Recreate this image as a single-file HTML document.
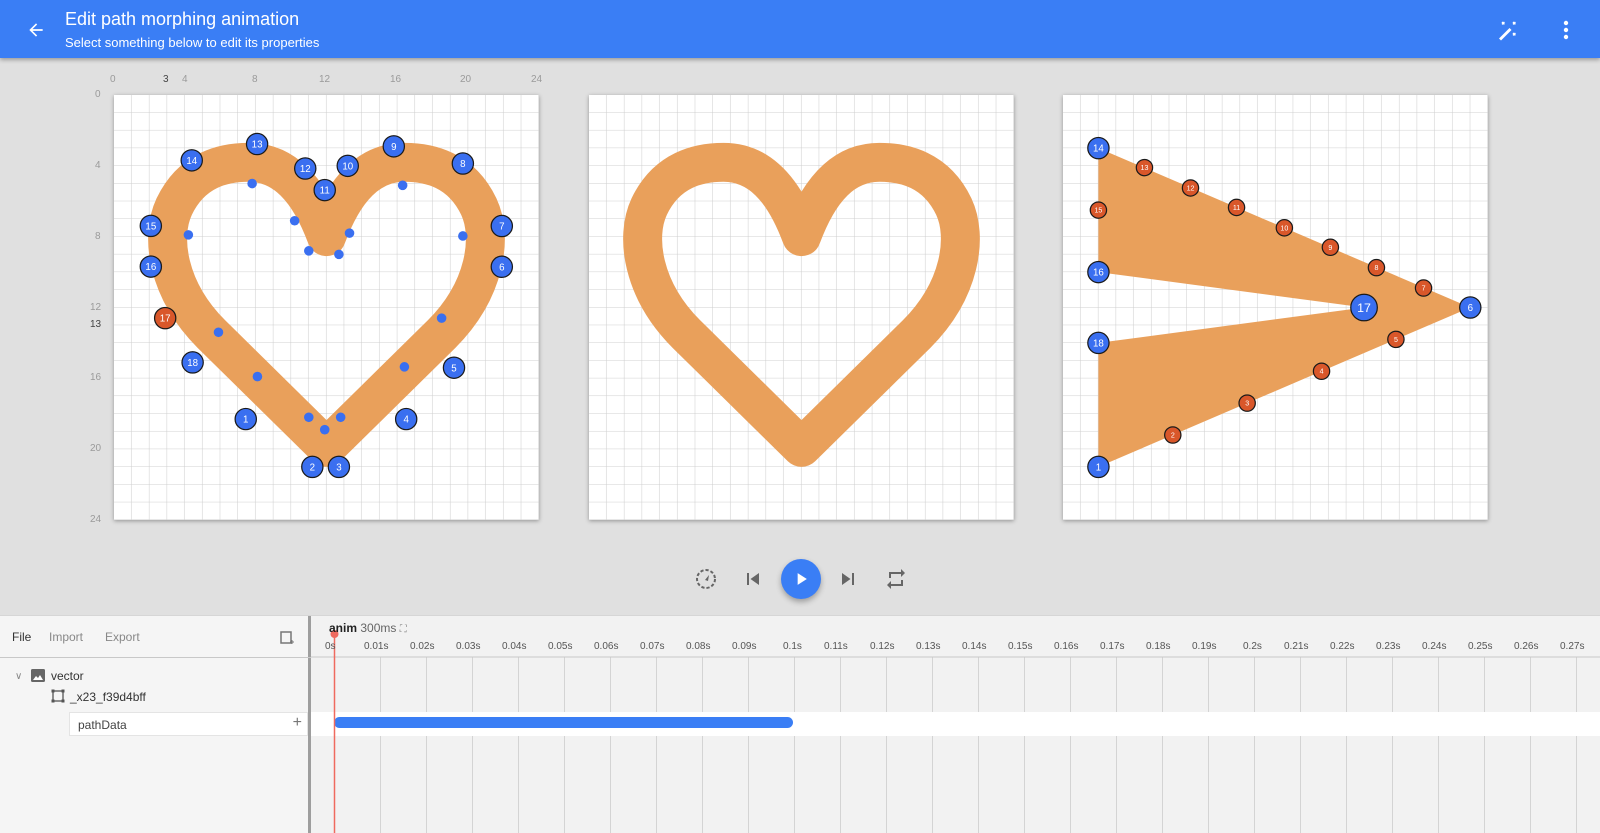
<!DOCTYPE html>
<html><head><meta charset="utf-8"><style>
*{margin:0;padding:0;box-sizing:border-box}
body{width:1600px;height:832px;overflow:hidden;background:#e0e0e0;font-family:"Liberation Sans",sans-serif;position:relative}
.hdr{position:absolute;left:0;top:0;width:1600px;height:58px;background:#3a7ef5;box-shadow:0 2px 4px rgba(0,0,0,.3);color:#fff;z-index:2}
.hdr .t{position:absolute;left:65px;top:9px;font-size:18px}
.hdr .s{position:absolute;left:65px;top:35px;font-size:13px}
.cv{position:absolute;top:95px;width:425px;height:425px;background:#fff;box-shadow:0 1px 4px rgba(0,0,0,.35)}
.lbl{position:absolute;font-size:10px;color:#9a9a9a}
.panel{position:absolute;left:0;top:615px;width:1600px;height:217px;background:#f4f4f4;border-top:1px solid #d6d6d6}
.left{position:absolute;left:0;top:0;width:311px;height:217px;border-right:3px solid #9e9e9e;background:#f5f5f5}
.tm{position:absolute;font-size:10px;color:#555;top:25px}
</style></head><body>
<div class="hdr">
<svg style="position:absolute;left:26px;top:20px" width="20" height="20" viewBox="0 0 24 24"><path d="M20 11H7.8l5.6-5.6L12 4l-8 8 8 8 1.4-1.4L7.8 13H20z" fill="#fff"/></svg>
<div class="t">Edit path morphing animation</div>
<div class="s">Select something below to edit its properties</div>
<svg style="position:absolute;left:1496px;top:19px" width="24" height="24" viewBox="0 0 24 24"><path d="M3 19.5l10.5-10.5 2 2L5 21.5z" fill="#fff"/><g stroke="#fff" stroke-width="1.4"><path d="M6 3l2.4 2.4M8.4 3L6 5.4M17 3l2.4 2.4M19.4 3L17 5.4M17 14l2.4 2.4M19.4 14L17 16.4"/></g></svg>
<svg style="position:absolute;left:1556px;top:19px" width="20" height="22" viewBox="0 0 20 22"><circle cx="10" cy="4" r="2.2" fill="#fff"/><circle cx="10" cy="11" r="2.2" fill="#fff"/><circle cx="10" cy="18" r="2.2" fill="#fff"/></svg>
</div>

<div class="lbl" style="left:110px;top:74px">0</div>
<div class="lbl" style="left:163px;top:74px;color:#444">3</div>
<div class="lbl" style="left:182px;top:74px">4</div>
<div class="lbl" style="left:252px;top:74px">8</div>
<div class="lbl" style="left:319px;top:74px">12</div>
<div class="lbl" style="left:390px;top:74px">16</div>
<div class="lbl" style="left:460px;top:74px">20</div>
<div class="lbl" style="left:531px;top:74px">24</div>
<div class="lbl" style="left:95px;top:89px">0</div>
<div class="lbl" style="left:95px;top:160px">4</div>
<div class="lbl" style="left:95px;top:231px">8</div>
<div class="lbl" style="left:90px;top:302px">12</div>
<div class="lbl" style="left:90px;top:319px;color:#444">13</div>
<div class="lbl" style="left:90px;top:372px">16</div>
<div class="lbl" style="left:90px;top:443px">20</div>
<div class="lbl" style="left:90px;top:514px">24</div>

<svg width="0" height="0" style="position:absolute"><defs>
<pattern id="g" width="1" height="1" patternUnits="userSpaceOnUse"><path d="M1 0V1H0" fill="none" stroke="#cfcfcf" stroke-width="0.06"/></pattern>
</defs></svg>

<svg class="cv" style="left:114px" viewBox="0 0 24 24">
<rect width="24" height="24" fill="url(#g)"/>
<path d="M12 19.9L5.5 13.5C3 11 2.6 8 3.4 6.3 4.4 4.2 6.2 3.8 7.6 3.8 9.6 3.8 11 5.3 12 8 13 5.3 14.4 3.8 16.4 3.8 17.8 3.8 19.6 4.2 20.6 6.3 21.4 8 21 11 18.5 13.5Z" fill="none" stroke="#e9a05b" stroke-width="2.2" stroke-linejoin="round"/>
<g fill="#3a6ff0">
<circle cx="7.8" cy="5" r=".27"/><circle cx="4.2" cy="7.9" r=".27"/><circle cx="5.9" cy="13.4" r=".27"/><circle cx="8.1" cy="15.9" r=".27"/><circle cx="11" cy="18.2" r=".27"/><circle cx="11.9" cy="18.9" r=".27"/><circle cx="12.8" cy="18.2" r=".27"/><circle cx="16.4" cy="15.35" r=".27"/><circle cx="18.5" cy="12.6" r=".27"/><circle cx="19.7" cy="7.96" r=".27"/><circle cx="16.3" cy="5.1" r=".27"/><circle cx="13.3" cy="7.8" r=".27"/><circle cx="12.7" cy="9" r=".27"/><circle cx="11" cy="8.8" r=".27"/><circle cx="10.2" cy="7.1" r=".27"/>
</g>
<g stroke="#1a1a1a" stroke-width=".07" font-size=".55" font-family="Liberation Sans" text-anchor="middle">
<g fill="#3a6ff0">
<circle cx="7.44" cy="18.3" r=".6"/><circle cx="11.2" cy="21" r=".6"/><circle cx="12.7" cy="21" r=".6"/><circle cx="16.5" cy="18.3" r=".6"/><circle cx="19.2" cy="15.4" r=".6"/><circle cx="21.9" cy="9.7" r=".6"/><circle cx="21.9" cy="7.4" r=".6"/><circle cx="19.7" cy="3.87" r=".6"/><circle cx="15.8" cy="2.9" r=".6"/><circle cx="13.2" cy="4" r=".6"/><circle cx="11.9" cy="5.37" r=".6"/><circle cx="10.8" cy="4.15" r=".6"/><circle cx="8.08" cy="2.77" r=".6"/><circle cx="4.39" cy="3.69" r=".6"/><circle cx="2.08" cy="7.39" r=".6"/><circle cx="2.08" cy="9.69" r=".6"/><circle cx="4.44" cy="15.1" r=".6"/>
</g>
<circle cx="2.89" cy="12.6" r=".6" fill="#d9572a"/>
<g fill="#fff" stroke="none">
<text x="7.44" y="18.5">1</text><text x="11.2" y="21.2">2</text><text x="12.7" y="21.2">3</text><text x="16.5" y="18.5">4</text><text x="19.2" y="15.6">5</text><text x="21.9" y="9.9">6</text><text x="21.9" y="7.6">7</text><text x="19.7" y="4.07">8</text><text x="15.8" y="3.1">9</text><text x="13.2" y="4.2">10</text><text x="11.9" y="5.57">11</text><text x="10.8" y="4.35">12</text><text x="8.08" y="2.97">13</text><text x="4.39" y="3.89">14</text><text x="2.08" y="7.59">15</text><text x="2.08" y="9.89">16</text><text x="2.89" y="12.8">17</text><text x="4.44" y="15.3">18</text>
</g></g>
</svg>

<svg class="cv" style="left:589px" viewBox="0 0 24 24">
<rect width="24" height="24" fill="url(#g)"/>
<path d="M12 19.9L5.5 13.5C3 11 2.6 8 3.4 6.3 4.4 4.2 6.2 3.8 7.6 3.8 9.6 3.8 11 5.3 12 8 13 5.3 14.4 3.8 16.4 3.8 17.8 3.8 19.6 4.2 20.6 6.3 21.4 8 21 11 18.5 13.5Z" fill="none" stroke="#e9a05b" stroke-width="2.2" stroke-linejoin="round"/>
</svg>

<svg class="cv" style="left:1063px" viewBox="0 0 24 24">
<rect width="24" height="24" fill="url(#g)"/>
<path d="M2 3L23 12 2 21 2 14 17 12 2 10Z" fill="#e9a05b"/>
<g stroke="#1a1a1a" stroke-width=".07" font-family="Liberation Sans" text-anchor="middle">
<g fill="#d9572a">
<circle cx="4.6" cy="4.1" r=".46"/><circle cx="7.2" cy="5.25" r=".46"/><circle cx="9.8" cy="6.35" r=".46"/><circle cx="12.5" cy="7.5" r=".46"/><circle cx="15.1" cy="8.6" r=".46"/><circle cx="17.7" cy="9.75" r=".46"/><circle cx="20.36" cy="10.9" r=".46"/><circle cx="18.8" cy="13.8" r=".46"/><circle cx="14.6" cy="15.6" r=".46"/><circle cx="10.4" cy="17.4" r=".46"/><circle cx="6.2" cy="19.2" r=".46"/><circle cx="2" cy="6.5" r=".46"/>
</g>
<g fill="#3a6ff0">
<circle cx="2" cy="3" r=".6"/><circle cx="23" cy="12" r=".6"/><circle cx="2" cy="21" r=".6"/><circle cx="2" cy="10" r=".6"/><circle cx="2" cy="14" r=".6"/><circle cx="17" cy="12" r=".75"/>
</g>
<g fill="#fff" stroke="none" font-size=".4">
<text x="4.6" y="4.24">13</text><text x="7.2" y="5.39">12</text><text x="9.8" y="6.49">11</text><text x="12.5" y="7.64">10</text><text x="15.1" y="8.74">9</text><text x="17.7" y="9.89">8</text><text x="20.36" y="11.04">7</text><text x="18.8" y="13.94">5</text><text x="14.6" y="15.74">4</text><text x="10.4" y="17.54">3</text><text x="6.2" y="19.34">2</text><text x="2" y="6.64">15</text>
</g>
<g fill="#fff" stroke="none" font-size=".55">
<text x="2" y="3.2">14</text><text x="23" y="12.2">6</text><text x="2" y="21.2">1</text><text x="2" y="10.2">16</text><text x="2" y="14.2">18</text><text x="17" y="12.24" font-size=".7">17</text>
</g></g>
</svg>

<svg style="position:absolute;left:694px;top:567px" width="24" height="24" viewBox="0 0 24 24"><circle cx="12" cy="12" r="9" fill="none" stroke="#666" stroke-width="2" stroke-dasharray="3.2 2"/><path d="M11 13l4-5-1 6z" fill="#666"/></svg>
<svg style="position:absolute;left:741px;top:567px" width="24" height="24" viewBox="0 0 24 24"><path d="M6 6h2v12H6zM9.5 12L18 18V6z" fill="#666"/></svg>
<div style="position:absolute;left:781px;top:559px;width:40px;height:40px;border-radius:50%;background:#3a7ef5;box-shadow:0 3px 6px rgba(0,0,0,.3)"><svg style="position:absolute;left:10px;top:10px" width="20" height="20" viewBox="0 0 24 24"><path d="M8 5v14l11-7z" fill="#fff"/></svg></div>
<svg style="position:absolute;left:836px;top:567px" width="24" height="24" viewBox="0 0 24 24"><path d="M6 18l8.5-6L6 6zM16 6h2v12h-2z" fill="#666"/></svg>
<svg style="position:absolute;left:884px;top:567px" width="24" height="24" viewBox="0 0 24 24"><path d="M7 7h10v3l4-4-4-4v3H5v6h2zM17 17H7v-3l-4 4 4 4v-3h12v-6h-2z" fill="#666"/></svg>

<div class="panel">
<div style="position:absolute;left:311px;top:0;right:0;height:217px;background:#f2f2f2">
<svg style="position:absolute;left:0;top:0" width="1289" height="217">
<g stroke="#d4d4d4" stroke-width="1">
<line x1="69.5" y1="41" x2="69.5" y2="217"/><line x1="115.5" y1="41" x2="115.5" y2="217"/><line x1="161.5" y1="41" x2="161.5" y2="217"/><line x1="207.5" y1="41" x2="207.5" y2="217"/><line x1="253.5" y1="41" x2="253.5" y2="217"/><line x1="299.5" y1="41" x2="299.5" y2="217"/><line x1="345.5" y1="41" x2="345.5" y2="217"/><line x1="391.5" y1="41" x2="391.5" y2="217"/><line x1="437.5" y1="41" x2="437.5" y2="217"/><line x1="483.5" y1="41" x2="483.5" y2="217"/><line x1="529.5" y1="41" x2="529.5" y2="217"/><line x1="575.5" y1="41" x2="575.5" y2="217"/><line x1="621.5" y1="41" x2="621.5" y2="217"/><line x1="667.5" y1="41" x2="667.5" y2="217"/><line x1="713.5" y1="41" x2="713.5" y2="217"/><line x1="759.5" y1="41" x2="759.5" y2="217"/><line x1="805.5" y1="41" x2="805.5" y2="217"/><line x1="851.5" y1="41" x2="851.5" y2="217"/><line x1="897.5" y1="41" x2="897.5" y2="217"/><line x1="943.5" y1="41" x2="943.5" y2="217"/><line x1="989.5" y1="41" x2="989.5" y2="217"/><line x1="1035.5" y1="41" x2="1035.5" y2="217"/><line x1="1081.5" y1="41" x2="1081.5" y2="217"/><line x1="1127.5" y1="41" x2="1127.5" y2="217"/><line x1="1173.5" y1="41" x2="1173.5" y2="217"/><line x1="1219.5" y1="41" x2="1219.5" y2="217"/><line x1="1265.5" y1="41" x2="1265.5" y2="217"/>
</g>
<line x1="0" y1="41" x2="1289" y2="41" stroke="#c8c8c8"/>
<rect x="0" y="96" width="1289" height="24" fill="#fff"/>
<rect x="23" y="101" width="459" height="11" rx="5.5" fill="#3a7ef5"/>
<line x1="23.5" y1="20" x2="23.5" y2="217" stroke="#ef6a5f" stroke-width="1.5"/>
<circle cx="23.5" cy="18" r="4" fill="#ef6a5f"/>
</svg>
<div style="position:absolute;left:18px;top:5px;font-size:12px;color:#222"><b style="font-weight:600">anim</b> <span style="color:#666">300ms</span> <span style="color:#888;font-size:10px">⛶</span></div>
<div class="tm" style="left:14px">0s</div>
<div class="tm" style="left:53px">0.01s</div><div class="tm" style="left:99px">0.02s</div><div class="tm" style="left:145px">0.03s</div><div class="tm" style="left:191px">0.04s</div><div class="tm" style="left:237px">0.05s</div><div class="tm" style="left:283px">0.06s</div><div class="tm" style="left:329px">0.07s</div><div class="tm" style="left:375px">0.08s</div><div class="tm" style="left:421px">0.09s</div><div class="tm" style="left:472px">0.1s</div><div class="tm" style="left:513px">0.11s</div><div class="tm" style="left:559px">0.12s</div><div class="tm" style="left:605px">0.13s</div><div class="tm" style="left:651px">0.14s</div><div class="tm" style="left:697px">0.15s</div><div class="tm" style="left:743px">0.16s</div><div class="tm" style="left:789px">0.17s</div><div class="tm" style="left:835px">0.18s</div><div class="tm" style="left:881px">0.19s</div><div class="tm" style="left:932px">0.2s</div><div class="tm" style="left:973px">0.21s</div><div class="tm" style="left:1019px">0.22s</div><div class="tm" style="left:1065px">0.23s</div><div class="tm" style="left:1111px">0.24s</div><div class="tm" style="left:1157px">0.25s</div><div class="tm" style="left:1203px">0.26s</div><div class="tm" style="left:1249px">0.27s</div>
</div>
<div class="left">
<div style="position:absolute;left:12px;top:14px;font-size:12px;color:#333">File</div>
<div style="position:absolute;left:49px;top:14px;font-size:12px;color:#888">Import</div>
<div style="position:absolute;left:105px;top:14px;font-size:12px;color:#888">Export</div>
<svg style="position:absolute;left:280px;top:15px" width="14" height="14" viewBox="0 0 14 14"><rect x="1" y="1" width="10" height="11" fill="none" stroke="#777" stroke-width="1.5"/><path d="M10 11h4M12 9v4" stroke="#777" stroke-width="1"/></svg>
<div style="position:absolute;left:0;top:41px;width:311px;height:1px;background:#c8c8c8"></div>
<div style="position:absolute;left:15px;top:55px;font-size:10px;color:#888">∨</div>
<svg style="position:absolute;left:31px;top:53px" width="14" height="13" viewBox="0 0 14 13"><rect width="14" height="13" rx="1.5" fill="#666"/><path d="M2 11l3-4 2 2 2-3 3 5z" fill="#fff"/></svg>
<div style="position:absolute;left:51px;top:53px;font-size:12px;color:#333">vector</div>
<svg style="position:absolute;left:51px;top:73px" width="14" height="14" viewBox="0 0 14 14"><rect x="2" y="2" width="10" height="10" fill="none" stroke="#555" stroke-width="1.3"/><rect x=".5" y=".5" width="3" height="3" fill="#555"/><rect x="10.5" y=".5" width="3" height="3" fill="#555"/><rect x=".5" y="10.5" width="3" height="3" fill="#555"/><rect x="10.5" y="10.5" width="3" height="3" fill="#555"/></svg>
<div style="position:absolute;left:70px;top:74px;font-size:12px;color:#333">_x23_f39d4bff</div>
<div style="position:absolute;left:69px;top:96px;width:239px;height:24px;background:#fff;border:1px solid #e4e4e4"><span style="position:absolute;left:8px;top:5px;font-size:12px;color:#444">pathData</span><span style="position:absolute;right:5px;top:1px;font-size:16px;color:#777">+</span></div>
</div>
</div>
</body></html>
